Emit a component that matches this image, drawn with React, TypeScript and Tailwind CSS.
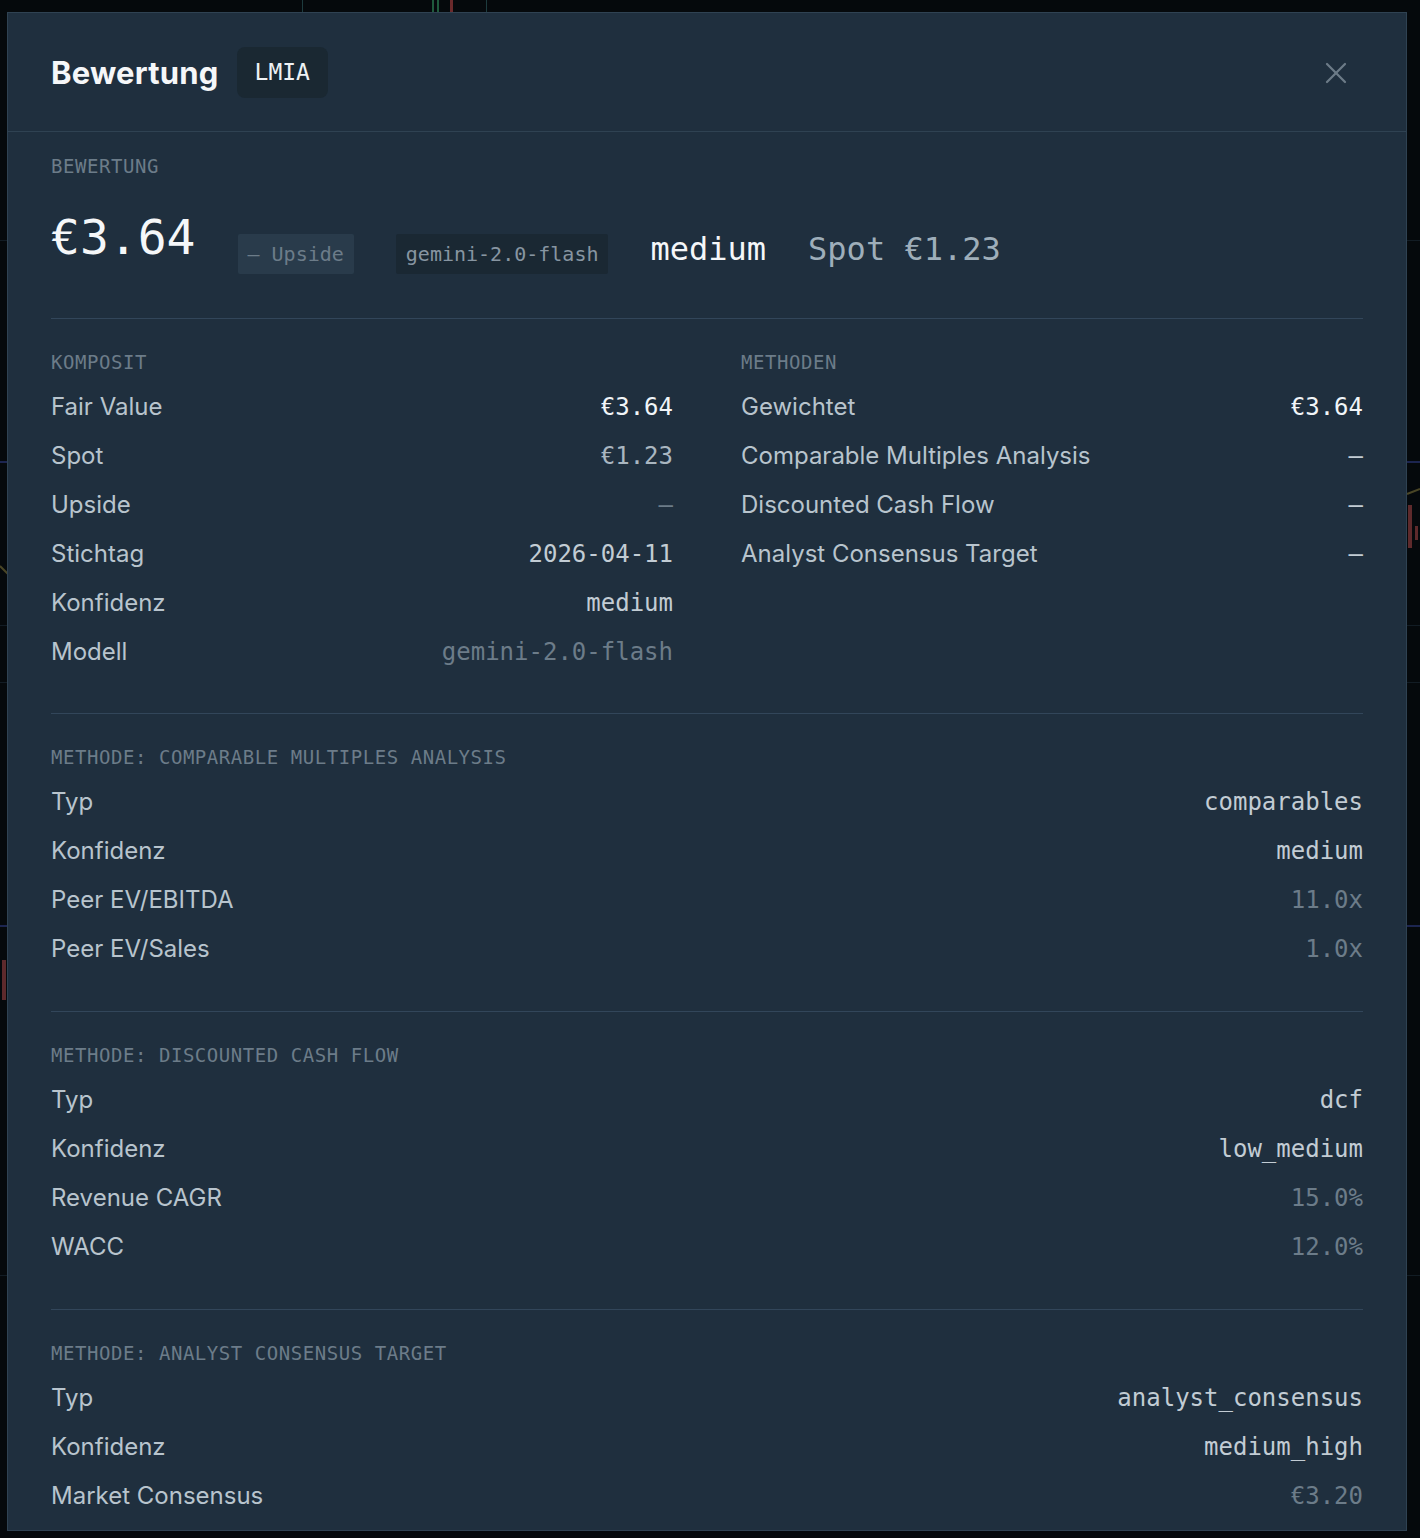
import { X } from "lucide-react";

const mono = "font-['DejaVu_Sans_Mono','Liberation_Mono',monospace]";
const sans = "font-['Inter','Noto_Sans',sans-serif]";

type Row = { label: string; value: string; tone: "strong" | "light" | "soft" | "dim" };

const toneClass: Record<Row["tone"], string> = {
  strong: "text-[#f1f5f8]",
  light: "text-[#c2ccd4]",
  soft: "text-[#a9b6c0]",
  dim: "text-[#6c7c89]",
};

const komposit: Row[] = [
  { label: "Fair Value", value: "€3.64", tone: "strong" },
  { label: "Spot", value: "€1.23", tone: "soft" },
  { label: "Upside", value: "—", tone: "dim" },
  { label: "Stichtag", value: "2026-04-11", tone: "light" },
  { label: "Konfidenz", value: "medium", tone: "light" },
  { label: "Modell", value: "gemini-2.0-flash", tone: "dim" },
];

const methoden: Row[] = [
  { label: "Gewichtet", value: "€3.64", tone: "strong" },
  { label: "Comparable Multiples Analysis", value: "—", tone: "light" },
  { label: "Discounted Cash Flow", value: "—", tone: "light" },
  { label: "Analyst Consensus Target", value: "—", tone: "light" },
];

const methods: { title: string; rows: Row[] }[] = [
  {
    title: "Methode: Comparable Multiples Analysis",
    rows: [
      { label: "Typ", value: "comparables", tone: "light" },
      { label: "Konfidenz", value: "medium", tone: "light" },
      { label: "Peer EV/EBITDA", value: "11.0x", tone: "dim" },
      { label: "Peer EV/Sales", value: "1.0x", tone: "dim" },
    ],
  },
  {
    title: "Methode: Discounted Cash Flow",
    rows: [
      { label: "Typ", value: "dcf", tone: "light" },
      { label: "Konfidenz", value: "low_medium", tone: "light" },
      { label: "Revenue CAGR", value: "15.0%", tone: "dim" },
      { label: "WACC", value: "12.0%", tone: "dim" },
    ],
  },
  {
    title: "Methode: Analyst Consensus Target",
    rows: [
      { label: "Typ", value: "analyst_consensus", tone: "light" },
      { label: "Konfidenz", value: "medium_high", tone: "light" },
      { label: "Market Consensus", value: "€3.20", tone: "dim" },
    ],
  },
];

function SectionLabel({ children }: { children: React.ReactNode }) {
  return (
    <div
      className={`${mono} text-[19px] leading-[28px] tracking-[0.55px] uppercase text-[#6c7c89] mb-[6px]`}
    >
      {children}
    </div>
  );
}

function DataRow({ row }: { row: Row }) {
  return (
    <div className="flex h-[49px] items-center justify-between">
      <span className={`${sans} text-[24px] leading-[32px] text-[#b8c4cd]`}>{row.label}</span>
      <span className={`${mono} text-[24px] leading-[34px] ${toneClass[row.tone]}`}>{row.value}</span>
    </div>
  );
}

function Divider() {
  return <div className="h-px bg-[#32465a]" />;
}

// faint price chart showing behind the dialog
function Backdrop() {
  return (
    <svg className="absolute inset-0" width="1420" height="1538" viewBox="0 0 1420 1538">
      <g stroke="#121c24" strokeWidth="1">
        <line x1="0" y1="240.5" x2="1420" y2="240.5" />
        <line x1="0" y1="625.5" x2="1420" y2="625.5" />
        <line x1="0" y1="682.5" x2="1420" y2="682.5" />
        <line x1="0" y1="1275.5" x2="1420" y2="1275.5" />
      </g>
      <g stroke="#1d3b3e" strokeWidth="1">
        <line x1="302.5" y1="0" x2="302.5" y2="12" />
        <line x1="486.5" y1="0" x2="486.5" y2="12" />
      </g>
      <line x1="0" y1="462" x2="1420" y2="462" stroke="#1c2550" strokeWidth="2" />
      <line x1="0" y1="926" x2="1420" y2="926" stroke="#1c2550" strokeWidth="2" />
      <polyline points="0,566 8,574" fill="none" stroke="#4a4626" strokeWidth="2" />
      <polyline points="1407,494 1420,489" fill="none" stroke="#4a4626" strokeWidth="2" />
      <rect x="432" y="0" width="2" height="12" fill="#1f5a3c" />
      <rect x="437" y="0" width="2" height="12" fill="#1f5a3c" />
      <rect x="450" y="0" width="3" height="12" fill="#6b2a2c" />
      <rect x="1408" y="505" width="4" height="43" fill="#5e2a2c" />
      <rect x="1415" y="526" width="3" height="14" fill="#5e2a2c" />
      <rect x="2" y="960" width="4" height="40" fill="#5e2a2c" />
    </svg>
  );
}

export default function App() {
  return (
    <div className="relative h-[1538px] w-[1420px] overflow-hidden bg-[#05090c]">
      <Backdrop />
      <div className="relative ml-[7px] pt-[12px]">
        <div className="flex h-[1519px] w-[1400px] flex-col overflow-hidden border border-[#2f4252] bg-[#1f2f3e]">
          {/* header */}
          <div className="flex h-[119px] shrink-0 items-center justify-between border-b border-[#2f4252] px-[43px]">
            <div className="flex items-center gap-[18px]">
              <h2 className={`${sans} text-[31px] font-bold leading-none tracking-[0.2px] text-[#f5f7f9]`}>
                Bewertung
              </h2>
              <span
                className={`${mono} flex h-[51px] items-center rounded-[8px] bg-[#1a2832] px-[18px] text-[23px] text-[#eef2f5]`}
              >
                LMIA
              </span>
            </div>
            <button className="mr-[7px] mt-[2px] flex h-[40px] w-[40px] items-center justify-center text-[#6c7b87]">
              <X size={36} strokeWidth={1.5} />
            </button>
          </div>

          <div className="px-[43px] pt-[20px]">
            {/* summary */}
            <SectionLabel>Bewertung</SectionLabel>
            <div className="mt-[33px] flex items-end gap-[42px] pb-[44px]">
              <span className={`${mono} mb-[13px] text-[48px] leading-[48px] text-[#f5f7f9]`}>€3.64</span>
              <span
                className={`${mono} h-[40px] rounded-[2px] bg-[#293b4b] px-[10px] text-[20px] leading-[40px] text-[#6c7c89]`}
              >
                — Upside
              </span>
              <span
                className={`${mono} h-[40px] rounded-[2px] bg-[#1a2833] px-[10px] text-[20px] leading-[40px] text-[#8795a1]`}
              >
                gemini-2.0-flash
              </span>
              <span className={`${mono} mb-[5px] text-[32px] leading-[40px] text-[#f5f7f9]`}>medium</span>
              <span className={`${mono} mb-[5px] text-[32px] leading-[40px] text-[#9eaeba]`}>Spot €1.23</span>
            </div>

            <Divider />
            <div className="grid grid-cols-2 gap-x-[68px] pb-[37px] pt-[29px]">
              <div>
                <SectionLabel>Komposit</SectionLabel>
                {komposit.map((r) => (
                  <DataRow key={r.label} row={r} />
                ))}
              </div>
              <div>
                <SectionLabel>Methoden</SectionLabel>
                {methoden.map((r) => (
                  <DataRow key={r.label} row={r} />
                ))}
              </div>
            </div>

            {methods.map((m) => (
              <div key={m.title}>
                <Divider />
                <div className="pb-[38px] pt-[29px]">
                  <SectionLabel>{m.title}</SectionLabel>
                  {m.rows.map((r) => (
                    <DataRow key={r.label} row={r} />
                  ))}
                </div>
              </div>
            ))}
          </div>
        </div>
      </div>
    </div>
  );
}
